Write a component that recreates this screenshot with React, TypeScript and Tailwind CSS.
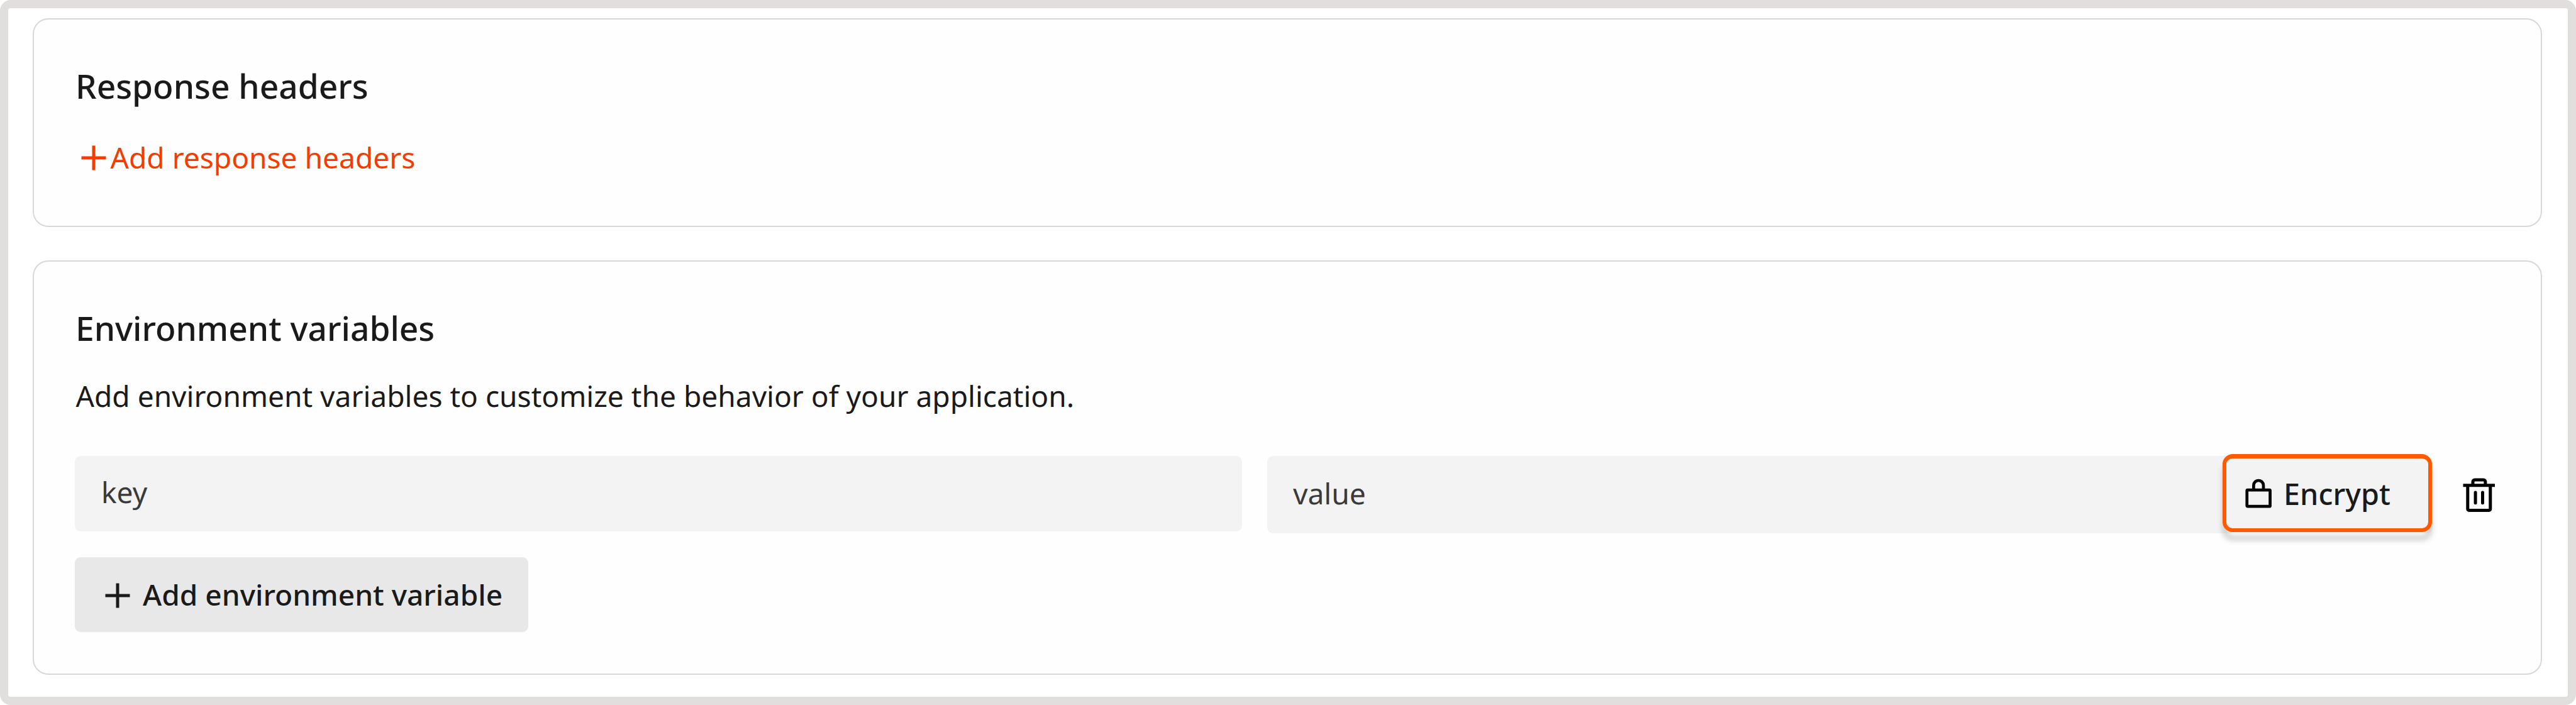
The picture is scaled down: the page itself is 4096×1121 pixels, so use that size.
import type { ReactNode } from "react";

function PlusIcon({ className = "" }: { className?: string }) {
  return (
    <svg viewBox="0 0 40 40" className={`h-[40px] w-[40px] shrink-0 ${className}`} fill="none" stroke="currentColor" strokeWidth="5">
      <path d="M20 0.5V39.5M0.5 20H39.5" />
    </svg>
  );
}

function LockIcon() {
  return (
    <svg viewBox="0 0 48 48" className="h-[48px] w-[48px] shrink-0" fill="none" stroke="#000" strokeWidth="4.7" strokeLinejoin="round">
      <rect x="5.8" y="18.1" width="36.8" height="26.1" rx="1" />
      <path d="M16.4 18V10.8a7.8 7.8 0 0 1 15.6 0V18" />
    </svg>
  );
}

function TrashIcon() {
  return (
    <svg viewBox="0 0 52 56" className="h-[56px] w-[52px]" fill="none" stroke="#000" strokeWidth="5">
      <path d="M0.5 11.8H51" />
      <path d="M7.8 12V49.4a2 2 0 0 0 2 2H41.8a2 2 0 0 0 2-2V12" />
      <path d="M16 12V6.1a3 3 0 0 1 3-3H32.9a3 3 0 0 1 3 3V12" />
      <path d="M20.1 23.1V39.7M31.5 23.1V39.7" strokeLinecap="round" />
    </svg>
  );
}

function Card({ className, children }: { className: string; children: ReactNode }) {
  return (
    <section className={`flex flex-col items-start rounded-[25px] border-2 border-[#d8d7dc] bg-[#fefefe] pl-[65px] ${className}`}>
      {children}
    </section>
  );
}

function Title({ children }: { children: ReactNode }) {
  return <h2 className="ml-px text-[53.25px] leading-[72px] font-medium">{children}</h2>;
}

export default function App() {
  return (
    <div className="h-[1121px] w-[4096px] bg-white">
      <main className="flex h-full w-full flex-col gap-[53px] overflow-hidden rounded-[17px] border-[13px] border-[#e2dedd] bg-white pt-[16px] pr-[41px] pl-[39px] font-['Noto_Sans',sans-serif] text-[46.1px] leading-[64px] whitespace-nowrap text-[#1a1a1a] [text-rendering:geometricPrecision]">
        <Card className="h-[332px] pt-[70px]">
          <Title>Response headers</Title>
          <button className="mt-[46px] ml-[9.5px] flex items-center text-[#f43c00]">
            <PlusIcon />
            <span className="ml-[7px]">Add response headers</span>
          </button>
        </Card>

        <Card className="h-[659px] pt-[70px]">
          <Title>Environment variables</Title>
          <p className="mt-[40px] ml-[1.5px]">Add environment variables to customize the behavior of your application.</p>

          <div className="mt-[63px] flex items-start">
            <div className="h-[119.5px] w-[1856px] rounded-[9px] bg-[#f3f3f3] pt-[26px] pl-[42px] text-[#3a3a3a]">key</div>
            <div className="ml-[40px] flex h-[123px] w-[1853px] items-start rounded-[9px] bg-[#f3f3f3] pl-[41px]">
              <span className="pt-[28px] text-[#3a3a3a]">value</span>
              <div className="relative isolate -mt-[3px] mr-px ml-auto h-[124px] w-[333px]">
                <div className="absolute inset-0 -z-10 translate-y-[13px] rounded-[16px] border-[7px] border-black/20 blur-[4px]" />
                <button className="flex h-full w-full items-center rounded-[16px] border-[6px] border-t-[7px] border-[#ff5a00] bg-[#f3f3f3] pl-[27px] text-[46.8px] font-medium">
                  <LockIcon />
                  <span className="ml-[16px]">Encrypt</span>
                </button>
              </div>
            </div>
            <button className="mt-[35px] ml-[48px]">
              <TrashIcon />
            </button>
          </div>

          <button className="mt-[38px] flex h-[119px] w-[721px] items-center rounded-[9px] bg-[#e8e8e8] pl-[48px] font-medium">
            <PlusIcon className="translate-y-[1px]" />
            <span className="ml-[20px]">Add environment variable</span>
          </button>
        </Card>
      </main>
    </div>
  );
}
